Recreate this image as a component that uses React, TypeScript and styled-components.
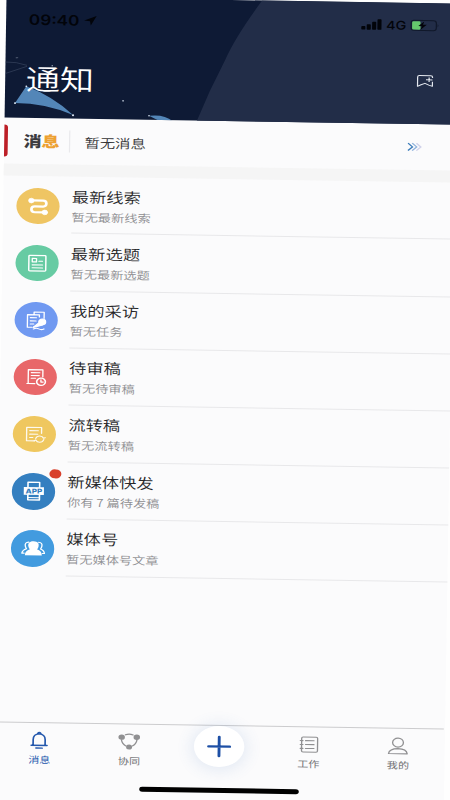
import React from "react";
import styled, { createGlobalStyle } from "styled-components";

const Global = createGlobalStyle`
  * { box-sizing: border-box; }
  html, body { margin: 0; padding: 0; background: #fff; }
  body { overflow: hidden; font-family: "Noto Sans CJK SC", "Inter", sans-serif; }
  svg { display: block; flex: none; overflow: visible; }
`;

const Viewport = styled.div`
  width: 450px;
  height: 800px;
  overflow: hidden;
  background: #fefefe;
`;

/* The phone screen is laid out at 375px and shown widened with a slight tilt. */
const Screen = styled.div`
  width: 375px;
  height: 822px;
  display: flex;
  flex-direction: column;
  background: #fbfbfc;
  transform-origin: 0 0;
  transform: matrix(1.2, 0.0187, -0.0158, 1, 6.5, -3.5);
`;

const Header = styled.header`
  position: relative;
  height: 121.4px;
  flex: none;
  background: #0e1a35;
  overflow: hidden;
`;

const Backdrop = styled.svg`
  position: absolute;
  inset: 0;
`;

const StatusBar = styled.div`
  position: relative;
  display: flex;
  align-items: center;
  height: 45px;
  padding: 0 14.4px 0 19px;
  color: #02040a;
  font-family: "Inter", sans-serif;
`;

const Clock = styled.span`
  font-size: 14.3px;
  font-weight: 600;
  margin-right: 4px;
`;

const Signals = styled.div`
  margin-left: auto;
  display: flex;
  align-items: center;
  gap: 3.4px;
  font-size: 12px;
  font-weight: 500;
`;

const TitleBar = styled.div`
  position: relative;
  display: flex;
  align-items: center;
  justify-content: space-between;
  height: 71px;
  padding: 0 18px 0 17.3px;
`;

const Title = styled.h1`
  margin: 0;
  font-size: 28.4px;
  line-height: 40px;
  font-weight: 350;
  color: #fff;
`;

const MessageBar = styled.section`
  display: flex;
  align-items: center;
  height: 46px;
  flex: none;
  padding-right: 27.5px;
`;

const Marker = styled.i`
  width: 3.4px;
  height: 32px;
  background: #bd1f27;
  border-radius: 0 3px 3px 0;
`;

const Brand = styled.strong<{ $accent?: boolean }>`
  font-size: 15px;
  line-height: 20px;
  font-weight: 900;
  color: ${(p) => (p.$accent ? "#eda132" : "#3b3b3f")};
`;

const BrandGroup = styled.div`
  display: flex;
  width: 38.3px;
  margin-left: 12.7px;
`;

const Notice = styled.span`
  flex: 1;
  height: 22px;
  line-height: 23px;
  padding-left: 11.5px;
  border-left: 1px solid #e9e9ec;
  font-size: 12.8px;
  font-weight: 350;
  color: #333335;
`;

const Gap = styled.div`
  height: 12px;
  flex: none;
  background: #f5f5f5;
`;

const List = styled.main`
  flex: none;
  height: 545.4px;
`;

const Row = styled.div`
  display: flex;
  height: 57.1px;
  padding-left: 10.5px;
`;

const Disc = styled.div<{ $color: string }>`
  position: relative;
  width: 36.4px;
  height: 36.4px;
  margin: 11.3px 10.2px 0 0;
  flex: none;
  border-radius: 50%;
  background: ${(p) => p.$color};
`;

const Badge = styled.i`
  position: absolute;
  left: 31.8px;
  top: -4.6px;
  width: 9.4px;
  height: 9.4px;
  border-radius: 50%;
  background: #d8402c;
`;

const RowBody = styled.div`
  flex: 1;
  padding-top: 8.2px;
  border-bottom: 1px solid #e8e8ea;
`;

const RowTitle = styled.div`
  font-size: 14.4px;
  line-height: 21px;
  font-weight: 350;
  color: #262628;
`;

const RowSub = styled.div`
  font-size: 11px;
  line-height: 20px;
  font-weight: 350;
  color: #8d8d90;
`;

const TabBar = styled.nav`
  display: grid;
  grid-template-columns: repeat(5, 1fr);
  height: 58px;
  width: 373.6px;
  flex: none;
  border-top: 1px solid #ccccce;
`;

const Tab = styled.div<{ $active?: boolean }>`
  display: flex;
  flex-direction: column;
  align-items: center;
  padding-top: 8px;
  color: ${(p) => (p.$active ? "#2458ad" : "#909092")};
`;

const TabLabel = styled.span<{ $active?: boolean }>`
  font-size: 9.2px;
  line-height: 14px;
  margin-top: 3px;
  color: ${(p) => (p.$active ? "#2458ad" : "#707073")};
`;

const AddButton = styled.div`
  width: 41.6px;
  height: 41px;
  margin-top: -7.8px;
  border-radius: 50%;
  display: flex;
  align-items: center;
  justify-content: center;
  background: #fff;
  box-shadow: 0 1px 15px 2px rgba(70, 120, 190, 0.14);
`;

const HomeIndicator = styled.div`
  width: 133px;
  height: 4.6px;
  margin: 5.4px auto 0;
  border-radius: 3px;
  background: #000;
`;

const HeaderArt = () => (
  <Backdrop width="375" height="122" viewBox="0 0 375 122">
    <path d="M213 0Q191 37 183 60Q170 91 160 122H375V0Z" fill="#222d48" />
    <path d="M8.5 106.4L17.7 89.5Q40 99 57 117.5Q34 106 8.5 106.4Z" fill="#5386b8" />
    <path d="M120.3 117Q133 115 140 122H129Z" fill="#5386b8" />
    <path d="M0 65.5Q9 65 18 68.5M0 77L18 69.5" stroke="#44516a" strokeWidth=".5" fill="none" />
    <g fill="#dbe6f2">
      <circle cx="8.5" cy="106.4" r=".9" />
      <circle cx="17.7" cy="89.5" r=".8" />
      <circle cx="57" cy="117.7" r=".9" />
      <circle cx="120.3" cy="117" r=".7" />
      <ellipse cx="98.5" cy="102.5" rx=".9" ry=".6" />
      <ellipse cx="9.5" cy="61" rx="1.2" ry=".5" opacity=".4" />
      <circle cx="39" cy="68.5" r=".6" />
    </g>
  </Backdrop>
);

const DiscArt = ({ children }: { children: React.ReactNode }) => (
  <svg
    width="36.4"
    height="36.4"
    viewBox="-18 -18 36 36"
    fill="none"
    stroke="#fff"
    strokeWidth="1.1"
    strokeLinejoin="round"
    strokeLinecap="round"
  >
    {children}
  </svg>
);

const RouteArt = () => (
  <DiscArt>
    <path d="M-5-5.7H4Q6.7-5.7 6.7-2.8Q6.7 .2 4 .2H-2.8Q-5.6 .2-5.6 3.1Q-5.6 6-2.8 6H5" strokeWidth="2.2" />
    <circle cx="-5.7" cy="-5.5" r="2.3" fill="#fff" strokeWidth=".6" />
    <circle cx="5.5" cy="6" r="2.3" fill="#fff" strokeWidth=".6" />
  </DiscArt>
);

const CardArt = () => (
  <DiscArt>
    <rect x="-7" y="-7.7" width="14" height="15.4" rx=".8" strokeWidth="1.2" />
    <rect x="-4.2" y="-4.7" width="3.5" height="3.4" />
    <path d="M1.3-2H4.2M-4.2 1.7H4.3M-4.2 4.6H4.3" />
  </DiscArt>
);

const InterviewArt = () => (
  <DiscArt>
    <path d="M-2-6V-8H6.3V-2M2.4-3.2V-5.4H-7.4V7H-3.6" />
    <path d="M-5-2.5H0M-5 .7H-.3M-5 3.8H-2.2" />
    <circle cx="4.8" cy="1.5" r="2.8" fill="#fff" />
    <path d="M2.3 2.3L-2.6 7.2L5.2 4.6" fill="#fff" />
    <path d="M-2.4 8.7Q0 7.2 2 8.5T6.3 8.5" />
  </DiscArt>
);

const ReviewArt = () => (
  <DiscArt>
    <path d="M6-.5V-7.4H-6V6.3H-.5M-7 6.3H-3" />
    <path d="M-3.5-4.5H3.5M-3.5-1.7H3M-3.5 1H0" />
    <circle cx="4.6" cy="4.4" r="3.6" strokeWidth="1.3" />
    <path d="M4.5 2.4V4.7H6.3" />
  </DiscArt>
);

const TransferArt = () => (
  <DiscArt>
    <g opacity=".9">
      <path d="M5.7-1V-6.8H-6.6V6.6H0" />
      <path d="M-4-3.5H3M-4 0H2.5M-4 3.3H-1.5" />
      <path d="M1 4.1Q1.8 1.6 4.2 1.6Q6.6 1.6 7.4 3.8L8.7 3.2M7.6 5.2Q6.8 7.8 4.3 7.8Q2 7.8 1 5.6L-.3 6.4" />
    </g>
  </DiscArt>
);

const AppArt = () => (
  <DiscArt>
    <path d="M-4.8-4V-8.8H4.8V-4M-4.8 3.5V8.6H4.8V3.5" strokeWidth="1.3" />
    <path d="M-4.8 6.3H4.8" strokeWidth=".9" />
    <rect x="-8.2" y="-4" width="16.6" height="7.6" fill="#fff" stroke="none" />
    <text
      x=".1"
      y="2.3"
      textAnchor="middle"
      fill="#347dbe"
      stroke="none"
      fontSize="6.6"
      fontWeight="800"
      fontFamily="Inter, sans-serif"
    >
      APP
    </text>
  </DiscArt>
);

const PeopleArt = () => (
  <DiscArt>
    <path
      d="M-3.4-6Q-7-5.6-6.2-2Q-5.9-.4-5.2 .6Q-8.6 2-9 5H-7.2M4.6-6Q8.2-5.6 7.4-2Q7.1-.4 6.4 .6Q9.4 2 9.6 5H8"
      strokeWidth="1.1"
    />
    <path
      d="M.5-7C-3.2-7-4.4-4.5-3.6-1.4Q-3.2.2-2.4 1Q-6.4 2.4-6.5 7H7.5Q7.4 2.4 3.4 1Q4.2.2 4.6-1.4C5.4-4.5 4.2-7 .5-7Z"
      fill="#fff"
      stroke="none"
    />
  </DiscArt>
);

const rows = [
  { title: "最新线索", sub: "暂无最新线索", color: "#efc563", Art: RouteArt },
  { title: "最新选题", sub: "暂无最新选题", color: "#67cba3", Art: CardArt },
  { title: "我的采访", sub: "暂无任务", color: "#7099f1", Art: InterviewArt },
  { title: "待审稿", sub: "暂无待审稿", color: "#e86769", Art: ReviewArt },
  { title: "流转稿", sub: "暂无流转稿", color: "#efc75f", Art: TransferArt },
  { title: "新媒体快发", sub: "你有 7 篇待发稿", color: "#347fc0", Art: AppArt, badge: true },
  { title: "媒体号", sub: "暂无媒体号文章", color: "#429bdf", Art: PeopleArt },
];

const TabArt = ({ children }: { children: React.ReactNode }) => (
  <svg
    width="20"
    height="18"
    viewBox="-10 -9 20 18"
    fill="none"
    stroke="currentColor"
    strokeWidth="1.1"
    strokeLinecap="round"
    strokeLinejoin="round"
  >
    {children}
  </svg>
);

export default function App() {
  return (
    <Viewport>
      <Global />
      <Screen>
        <Header>
          <HeaderArt />
          <StatusBar>
            <Clock>09:40</Clock>
            <svg width="10.4" height="10" viewBox="0 0 10.4 10">
              <path d="M10.4 0L5.6 9.8L4.9 5.4L0 4.8Z" fill="#02040a" />
            </svg>
            <Signals>
              <svg width="16.8" height="10.5" viewBox="0 0 16.8 10.5" fill="#02040a">
                <rect y="7" width="3.4" height="3.5" rx=".7" />
                <rect x="4.5" y="5" width="3.4" height="5.5" rx=".7" />
                <rect x="9" y="2.6" width="3.4" height="7.9" rx=".7" />
                <rect x="13.4" width="3.4" height="10.5" rx=".7" />
              </svg>
              <span>4G</span>
              <svg width="23.8" height="11" viewBox="0 0 23.8 11">
                <rect x=".5" y=".5" width="21" height="10" rx="2.5" fill="none" stroke="#10182a" />
                <rect x="1.3" y="1.3" width="7" height="8.4" rx="1.2" fill="#65c86d" />
                <path d="M11.4 1.4L6.5 6.2H9.4L8.4 9.8L13.5 4.8H10.4Z" fill="#02040a" />
                <path d="M22.6 3.8Q24 5.5 22.6 7.2Z" fill="#10182a" />
              </svg>
            </Signals>
          </StatusBar>
          <TitleBar>
            <Title>通知</Title>
            <svg
              width="13.6"
              height="12"
              viewBox="0 0 13.6 12"
              fill="none"
              stroke="#e4e8ef"
              strokeWidth="1"
              strokeLinejoin="round"
              transform="translate(0 -3)"
            >
              <path d="M13 2.8V2Q13 .6 11.6 .6H2Q.6 .6 .6 2V11.4L3.5 9.8L6.8 8.3L10 10L13 11.2V6.5" />
              <path d="M10.2 2.5V7M7.6 4.8H13" />
            </svg>
          </TitleBar>
        </Header>

        <MessageBar>
          <Marker />
          <BrandGroup>
            <Brand>消</Brand>
            <Brand $accent>息</Brand>
          </BrandGroup>
          <Notice>暂无消息</Notice>
          <svg width="12" height="8" viewBox="0 0 12 8" fill="none" strokeWidth="1.2">
            <path d="M.5 .3L4.2 4L.5 7.7" stroke="#3b7cba" />
            <path d="M4 .3L7.7 4L4 7.7" stroke="#8fb2dc" />
            <path d="M7.5 .3L11.2 4L7.5 7.7" stroke="#d0d2ea" />
          </svg>
        </MessageBar>
        <Gap />

        <List>
          {rows.map(({ title, sub, color, Art, badge }) => (
            <Row key={title}>
              <Disc $color={color}>
                <Art />
                {badge && <Badge />}
              </Disc>
              <RowBody>
                <RowTitle>{title}</RowTitle>
                <RowSub>{sub}</RowSub>
              </RowBody>
            </Row>
          ))}
        </List>

        <TabBar>
          <Tab $active>
            <TabArt>
              <path
                d="M-6.6 5.2H6.6M-5 5V-.5Q-5-6-.2-6.3Q5-6 5-.5V5M-1.3-6.8Q0-8.8 1.3-6.8"
                strokeWidth="1.4"
              />
              <path d="M-2.6 7.9H2.6" strokeWidth="1.4" />
            </TabArt>
            <TabLabel $active>消息</TabLabel>
          </Tab>
          <Tab>
            <TabArt>
              <path d="M-3.2-6.7Q0-8.2 3.2-6.7M-6.5-1.8Q-5.8 2.6-2.7 4.4M6.5-1.8Q5.8 2.6 2.7 4.4" />
              <g fill="currentColor" stroke="none">
                <circle cx="-6.3" cy="-4.4" r="2.7" />
                <circle cx="6.3" cy="-4.4" r="2.7" />
                <circle cx="0" cy="5.5" r="2.5" />
              </g>
            </TabArt>
            <TabLabel>协同</TabLabel>
          </Tab>
          <Tab>
            <AddButton>
              <svg width="20" height="21" viewBox="-10 -10.5 20 21">
                <path
                  d="M-8.8 0H8.8M0-9.5V9.5"
                  stroke="#1d4fa5"
                  strokeWidth="2.4"
                  strokeLinecap="round"
                />
              </svg>
            </AddButton>
          </Tab>
          <Tab>
            <TabArt>
              <rect x="-6.3" y="-7.3" width="13.3" height="15" rx="1.2" />
              <path d="M-3 -3.7H4M-3 .2H4M-3 4.1H4M-7.4-3.7H-5.2M-7.4 .2H-5.2M-7.4 4.1H-5.2" />
            </TabArt>
            <TabLabel>工作</TabLabel>
          </Tab>
          <Tab>
            <TabArt>
              <circle cx="0" cy="-3.2" r="4.5" />
              <path d="M-7.8 7.9Q-7.2 3 0 2.8Q7.2 3 7.8 7.9Z" />
            </TabArt>
            <TabLabel>我的</TabLabel>
          </Tab>
        </TabBar>
        <HomeIndicator />
      </Screen>
    </Viewport>
  );
}
